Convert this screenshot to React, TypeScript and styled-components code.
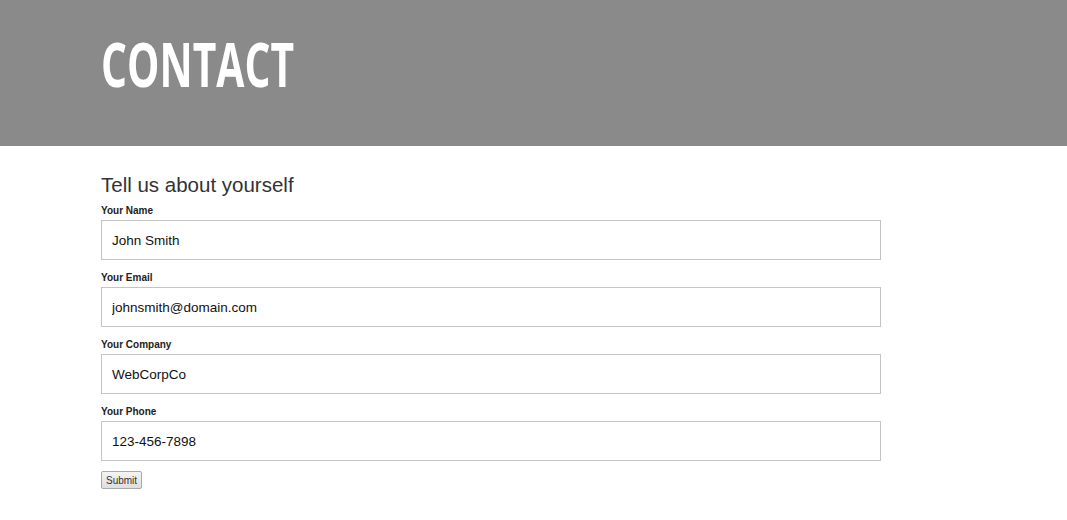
import React from 'react';
import styled, { createGlobalStyle } from 'styled-components';

const GlobalStyle = createGlobalStyle`
    body {
        margin: 0;
        font-family: 'Liberation Sans', Arial, sans-serif;
        background: #fff;
    }
`;

const Banner = styled.header`
    height: 146px;
    background-color: #8a8a8a;
    box-sizing: border-box;
    padding: 28px 0 0 101px;
`;

const Title = styled.h1`
    margin: 0;
    display: inline-block;
    font-family: 'Open Sans', sans-serif;
    font-weight: 700;
    font-size: 60px;
    line-height: 72px;
    color: #fff;
    transform: scaleX(0.68);
    transform-origin: left center;
`;

const Main = styled.main`
    width: 780px;
    margin: 27px 0 0 101px;
`;

const Heading = styled.h2`
    margin: 0 0 7px;
    font-size: 20.5px;
    font-weight: 400;
    line-height: 24px;
    color: #333;
`;

const Field = styled.div`
    margin-bottom: 11px;

    &:last-of-type {
        margin-bottom: 10px;
    }
`;

const Label = styled.label`
    display: block;
    font-size: 10px;
    font-weight: 700;
    line-height: 13px;
    color: #222;
    margin-bottom: 3px;
`;

const Input = styled.input`
    display: block;
    width: 100%;
    height: 40px;
    box-sizing: border-box;
    border: 1px solid #c4c4c4;
    padding: 0 10px;
    font-family: 'Liberation Sans', Arial, sans-serif;
    font-size: 13.5px;
    color: #111;
    background: #fff;
    outline: none;
`;

const SubmitButton = styled.button`
    display: block;
    height: 18px;
    padding: 0 4px;
    font-family: 'Liberation Sans', Arial, sans-serif;
    font-size: 10px;
    color: #333;
    background: linear-gradient(#f4f4f4, #dedede);
    border: 1px solid #a9a9a9;
    border-radius: 2px;
    cursor: pointer;
`;

const fields = [
    { id: 'name', label: 'Your Name', value: 'John Smith' },
    { id: 'email', label: 'Your Email', value: 'johnsmith@domain.com' },
    { id: 'company', label: 'Your Company', value: 'WebCorpCo' },
    { id: 'phone', label: 'Your Phone', value: '123-456-7898' },
];

const App = () => {
    return (
        <>
            <GlobalStyle />
            <Banner>
                <Title>CONTACT</Title>
            </Banner>
            <Main>
                <Heading>Tell us about yourself</Heading>
                <form onSubmit={(e) => e.preventDefault()}>
                    {fields.map((f) => (
                        <Field key={f.id}>
                            <Label htmlFor={f.id}>{f.label}</Label>
                            <Input id={f.id} defaultValue={f.value} />
                        </Field>
                    ))}
                    <SubmitButton type='submit'>Submit</SubmitButton>
                </form>
            </Main>
        </>
    );
};

export default App;
